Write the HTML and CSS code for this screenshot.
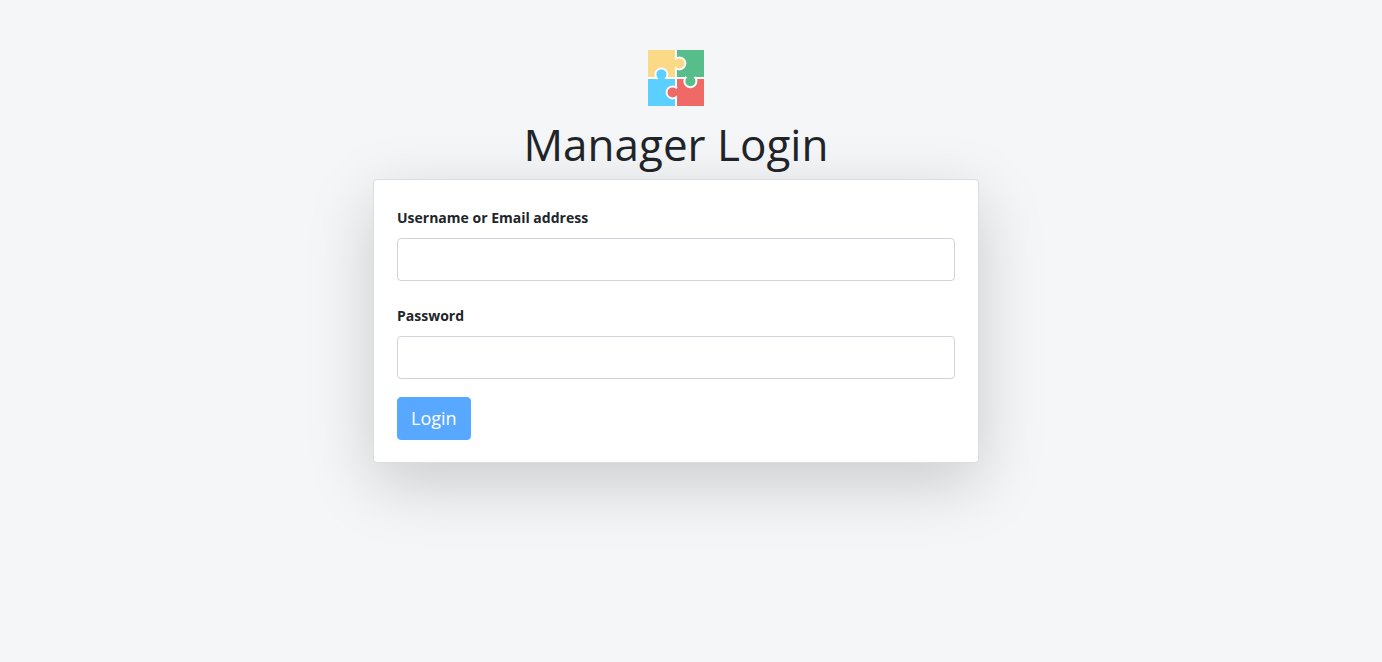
FILE: index.html
```
<!DOCTYPE html>
<html lang="en">
<head>
<meta charset="utf-8">
<title>Manager Login</title>
<link rel="stylesheet" href="styles.css">
</head>
<body>
<main class="login">
  <svg class="logo" viewBox="0 0 56 56" aria-hidden="true">
    <rect width="56" height="56" fill="#f9fafa"/>
    <path fill="#fad987" d="M0 0h27v27H0z"/>
    <path fill="#57bd8b" d="M29 0h27v27H29z"/>
    <path fill="#5bcfff" d="M0 29h27v27H0z"/>
    <path fill="#ef6a66" d="M29 29h27v27H29z"/>
    <g stroke="#f9fafa" stroke-width="2">
      <circle cx="31.4" cy="13.4" r="6" fill="#fad987"/>
      <circle cx="13.4" cy="24.4" r="6" fill="#5bcfff"/>
      <circle cx="42.4" cy="31.2" r="6" fill="#57bd8b"/>
      <circle cx="24.6" cy="42.4" r="6" fill="#ef6a66"/>
    </g>
    <path fill="#fad987" d="M22 9h5v9h-5zM26 10.2h4v6.4h-4z"/>
    <path fill="#5bcfff" d="M9 29h9v4H9zM10.2 26h6.4v4h-6.4z"/>
    <path fill="#57bd8b" d="M38 22h9v5h-9zM39.2 26h6.4v4h-6.4z"/>
    <path fill="#ef6a66" d="M29 38h4v9h-4zM26 39.2h4v6.4h-4z"/>
  </svg>
  <h1 class="title">Manager Login</h1>
  <form class="card">
    <div class="field">
      <label class="label" for="username">Username or Email address</label>
      <input class="input" id="username" type="text">
    </div>
    <div class="field">
      <label class="label" for="password">Password</label>
      <input class="input" id="password" type="password">
    </div>
    <button class="button" type="submit">Login</button>
  </form>
</main>
</body>
</html>
```
FILE: styles.css
```
* { box-sizing: border-box; }
body {
  min-height: 100vh;
  margin: 0;
  padding: 50px 30px 50px 0;
  background: #f4f6f8;
  color: #212529;
  font-family: "Segoe UI", "Open Sans", "Noto Sans", sans-serif;
}
.login {
  display: flex;
  flex-direction: column;
  align-items: center;
  max-width: 606px;
  margin: 0 auto;
}
.logo { display: block; width: 56px; height: 56px; }
.title {
  margin: 11px 0 8px;
  font-size: 44px;
  font-weight: 400;
  line-height: 54px;
}
.card {
  width: 100%;
  padding: 28px 23px 22px;
  background: #fff;
  border: 1px solid #dcdddf;
  border-radius: 4px;
  box-shadow: 0 20px 66px rgba(0, 0, 0, 0.175);
}
.field { margin-bottom: 25px; }
.field + .field { margin-bottom: 18px; }
.label {
  display: block;
  margin-bottom: 10px;
  font-size: 14px;
  font-weight: 700;
  line-height: 20px;
}
.input {
  display: block;
  width: 100%;
  height: 43px;
  padding: 8px 14px;
  background: #fff;
  border: 1px solid #ced4da;
  border-radius: 4px;
  color: #495057;
  font: inherit;
  font-size: 18px;
}
.button {
  display: block;
  padding: 8px 13px;
  background: #59a8ff;
  border: 1px solid #59a8ff;
  border-radius: 4px;
  color: #fff;
  font: inherit;
  font-size: 18px;
  line-height: 25px;
}
```
